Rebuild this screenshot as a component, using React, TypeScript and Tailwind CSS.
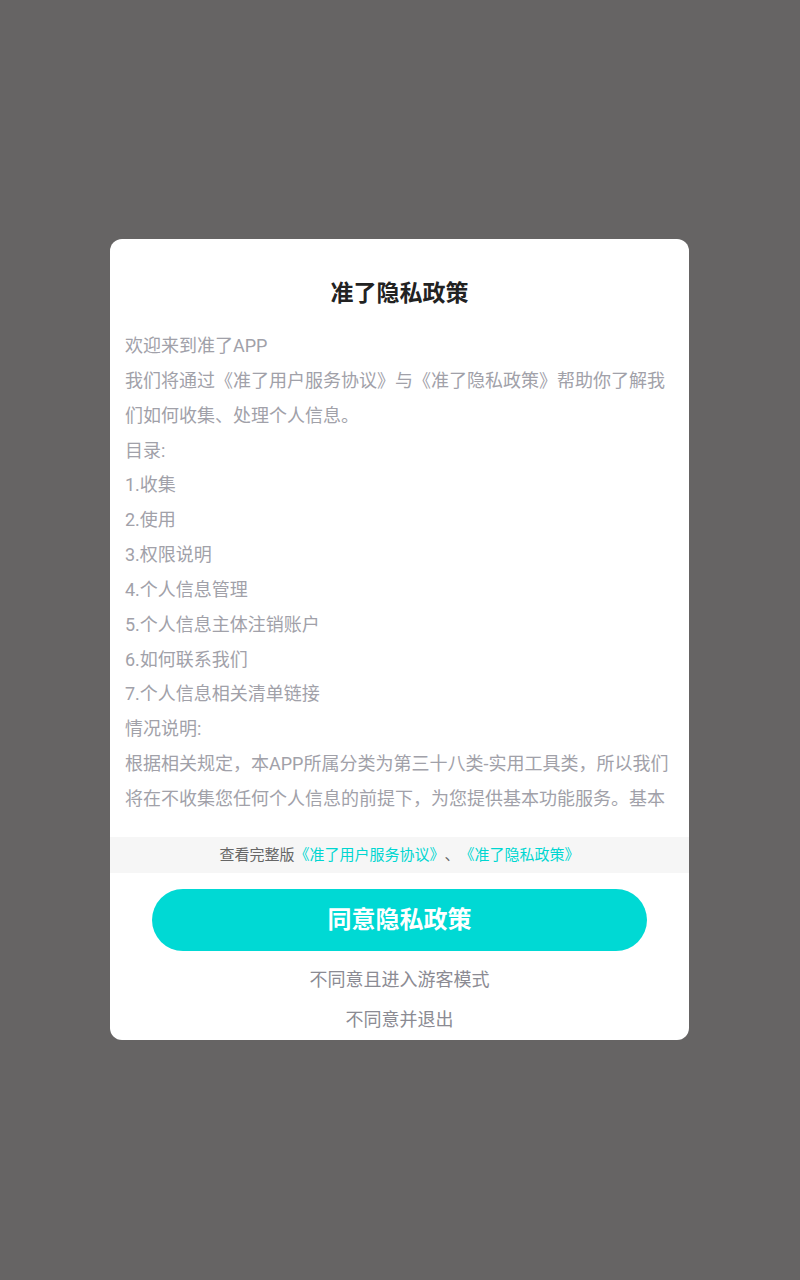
const bodyLines = [
  "欢迎来到准了APP",
  "我们将通过《准了用户服务协议》与《准了隐私政策》帮助你了解我们如何收集、处理个人信息。",
  "目录:",
  "1.收集",
  "2.使用",
  "3.权限说明",
  "4.个人信息管理",
  "5.个人信息主体注销账户",
  "6.如何联系我们",
  "7.个人信息相关清单链接",
  "情况说明:",
  "根据相关规定，本APP所属分类为第三十八类-实用工具类，所以我们将在不收集您任何个人信息的前提下，为您提供基本功能服务。基本功能服务包括浏览内容、搜索等，如需使用更多功能，请您同意本政策。",
];

export default function App() {
  return (
    <div
      className="h-[1280px] w-full bg-[#666464] pl-[110px] pt-[239px]"
      style={{ fontFamily: "Roboto, 'Noto Sans CJK SC', sans-serif" }}
    >
      <div className="flex w-[579px] flex-col overflow-hidden rounded-[12px] bg-white">
        <h1 className="pt-[40px] text-center text-[23px] font-bold leading-[30px] text-[#222222]">
          准了隐私政策
        </h1>

        <div className="mt-[20px] h-[490px] overflow-hidden px-[15px]">
          {bodyLines.map((line, i) => (
            <p key={i} className="text-[18px] leading-[34.85px] text-[#a1a1a9]">
              {line}
            </p>
          ))}
        </div>

        <div className="mt-[18px] flex h-[36px] items-center justify-center bg-[#f6f6f6] text-[15px] text-[#666666]">
          <span>查看完整版</span>
          <span className="text-[#00d6d1]">《准了用户服务协议》</span>
          <span>、</span>
          <span className="text-[#00d6d1]">《准了隐私政策》</span>
        </div>

        <button className="mx-auto mt-[16px] flex h-[62px] w-[495px] items-center justify-center rounded-full bg-[#00d9d4] text-[24px] font-bold text-white">
          同意隐私政策
        </button>

        <div className="mt-[9px] flex flex-col items-center text-[18px] leading-[40px] text-[#8b8b93]">
          <span>不同意且进入游客模式</span>
          <span>不同意并退出</span>
        </div>
      </div>
    </div>
  );
}
